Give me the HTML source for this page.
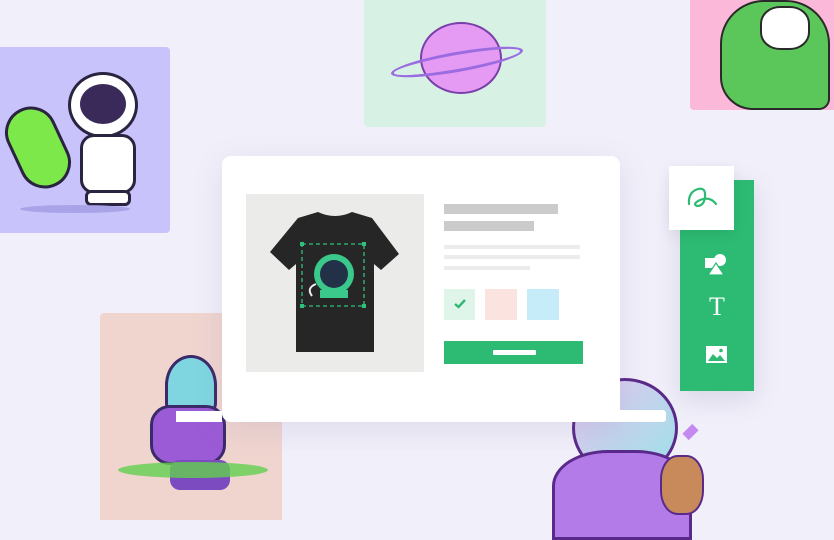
<!DOCTYPE html>
<html><head><style>
*{margin:0;padding:0;box-sizing:border-box}
body{width:834px;height:520px;overflow:hidden;background:#f1eff9;position:relative;font-family:"Liberation Sans",sans-serif}
.a{position:absolute}
</style></head><body>
<!-- purple astronaut card -->
<div class="a" style="left:0;top:47px;width:170px;height:186px;background:#c8c3fb;border-radius:0 4px 4px 0"></div>
<div class="a" style="left:68px;top:72px;width:70px;height:66px;border-radius:50%;background:#fff;border:3px solid #2a2440"></div>
<div class="a" style="left:80px;top:84px;width:46px;height:40px;border-radius:50%;background:#3a2a5a"></div>
<div class="a" style="left:80px;top:134px;width:56px;height:60px;border-radius:14px;background:#fff;border:3px solid #2a2440"></div>
<div class="a" style="left:85px;top:190px;width:46px;height:16px;border-radius:6px;background:#fff;border:3px solid #2a2440"></div>
<div class="a" style="left:12px;top:105px;width:52px;height:85px;border-radius:26px;background:#7de84a;border:3px solid #2a2440;transform:rotate(-25deg)"></div>
<div class="a" style="left:20px;top:205px;width:110px;height:8px;border-radius:50%;background:#a9a3e8"></div>
<!-- mint planet card -->
<div class="a" style="left:364px;top:0;width:182px;height:127px;background:#d8f1e5;border-radius:0 0 4px 4px"></div>
<div class="a" style="left:420px;top:22px;width:82px;height:72px;border-radius:50%;background:#e59af3;border:2px solid #7a3fa8"></div>
<div class="a" style="left:390px;top:52px;width:134px;height:20px;border-radius:50%;border:3px solid #9b6be0;transform:rotate(-10deg)"></div>
<!-- pink dino card -->
<div class="a" style="left:690px;top:0;width:144px;height:110px;background:#fcb8d8;border-radius:0 0 0 4px"></div>
<div class="a" style="left:720px;top:0;width:110px;height:110px;border-radius:40% 40% 10% 30%;background:#5bc75a;border:2px solid #2a2a2a"></div>
<div class="a" style="left:760px;top:6px;width:50px;height:44px;border-radius:40%;background:#fff;border:2px solid #2a2a2a"></div>
<!-- peach card -->
<div class="a" style="left:100px;top:313px;width:182px;height:207px;background:#f0d5cf;border-radius:4px 4px 0 0"></div>
<div class="a" style="left:165px;top:355px;width:52px;height:60px;border-radius:50% 50% 20% 20%;background:#7fd6e0;border:3px solid #3a2a6a"></div>
<div class="a" style="left:150px;top:405px;width:76px;height:60px;border-radius:20px;background:#9b5bd6;border:3px solid #3a2a6a"></div>
<div class="a" style="left:170px;top:460px;width:60px;height:30px;border-radius:10px;background:#7d4bc0"></div>
<div class="a" style="left:118px;top:462px;width:150px;height:16px;border-radius:50%;background:#62cf4e;opacity:.8"></div>
<!-- bottom right astronaut -->
<div class="a" style="left:572px;top:378px;width:106px;height:100px;border-radius:50%;background:linear-gradient(135deg,#e8c8f0,#9be0e8);border:3px solid #5a2a8a"></div>
<div class="a" style="left:552px;top:450px;width:140px;height:90px;border-radius:40% 40% 0 0;background:#b27be8;border:3px solid #5a2a8a"></div>
<div class="a" style="left:660px;top:455px;width:44px;height:60px;border-radius:40%;background:#c88a5a;border:2px solid #5a2a8a"></div>
<div class="a" style="left:686px;top:425px;width:9px;height:14px;background:#c58af0;transform:rotate(45deg)"></div>
<!-- main card -->
<div class="a" style="left:222px;top:156px;width:398px;height:266px;background:#fff;border-radius:9px;box-shadow:0 8px 30px rgba(120,110,170,.15)"></div>
<div class="a" style="left:246px;top:194px;width:178px;height:178px;background:#ebebea"></div>
<svg class="a" style="left:246px;top:194px" width="178" height="178" viewBox="0 0 178 178">
<path d="M52 24 L72 18 Q89 26 106 18 L126 24 L153 60 L135 76 L128 70 L128 158 L50 158 L50 70 L43 76 L24 58 Z" fill="#262626"/>
<rect x="56" y="50" width="62" height="62" fill="none" stroke="#2fc07a" stroke-width="1.3" stroke-dasharray="4 3"/>
<rect x="54" y="48" width="4" height="4" fill="#2fc07a"/><rect x="116" y="48" width="4" height="4" fill="#2fc07a"/>
<rect x="54" y="110" width="4" height="4" fill="#2fc07a"/><rect x="116" y="110" width="4" height="4" fill="#2fc07a"/>
<circle cx="88" cy="80" r="20" fill="#3ac98a"/><circle cx="88" cy="80" r="14" fill="#223048"/>
<rect x="74" y="96" width="28" height="8" fill="#3ac98a"/>
<path d="M70 90 Q60 94 66 102" stroke="#eee" stroke-width="2" fill="none"/>
</svg>
<div class="a" style="left:444px;top:204px;width:114px;height:10px;background:#cbcbcb"></div>
<div class="a" style="left:444px;top:221px;width:90px;height:10px;background:#cbcbcb"></div>
<div class="a" style="left:444px;top:245px;width:136px;height:4px;background:#ececec"></div>
<div class="a" style="left:444px;top:255px;width:136px;height:4px;background:#ececec"></div>
<div class="a" style="left:444px;top:266px;width:86px;height:4px;background:#ececec"></div>
<div class="a" style="left:444px;top:289px;width:31px;height:31px;background:#dff5ea"></div>
<svg class="a" style="left:453px;top:298px" width="14" height="12"><path d="M2 6 L5.5 9 L12 2" stroke="#2fb874" stroke-width="2.4" fill="none"/></svg>
<div class="a" style="left:485px;top:289px;width:32px;height:31px;background:#fbe4df"></div>
<div class="a" style="left:527px;top:289px;width:32px;height:31px;background:#c6ecf9"></div>
<div class="a" style="left:444px;top:341px;width:139px;height:23px;background:#2dbb73"></div>
<div class="a" style="left:493px;top:350px;width:43px;height:5px;background:#fff;border-radius:1px"></div>
<!-- white bar overlaying -->
<div class="a" style="left:600px;top:410px;width:66px;height:12px;background:#fff;border-radius:3px"></div>
<div class="a" style="left:176px;top:411px;width:46px;height:11px;background:#fff"></div>
<!-- toolbar -->
<div class="a" style="left:680px;top:180px;width:74px;height:211px;background:#2dbb73;box-shadow:0 8px 24px rgba(100,100,160,.18)"></div>
<div class="a" style="left:669px;top:166px;width:65px;height:64px;background:#fff;box-shadow:0 4px 14px rgba(0,0,0,.08)"></div>
<svg class="a" style="left:686px;top:184px" width="34" height="28"><path d="M3 20 Q2 8 12 5 Q20 3 19 13 Q18 22 11 22 Q6 20 14 16 Q24 12 30 20" stroke="#2dbb73" stroke-width="2.2" fill="none" stroke-linecap="round"/></svg>
<svg class="a" style="left:705px;top:253px" width="22" height="24"><rect x="0" y="5" width="10" height="10" fill="#fff"/><circle cx="15" cy="7" r="6" fill="#fff"/><path d="M11 10 L19 22 L3 22 Z" fill="#fff" stroke="#2dbb73" stroke-width="1.2"/></svg>
<div class="a" style="left:704px;top:292px;width:26px;text-align:center;color:#fff;font-family:'Liberation Serif',serif;font-size:26px;line-height:30px">T</div>
<svg class="a" style="left:706px;top:346px" width="22" height="18"><rect x="0" y="0" width="21" height="17" fill="#fff"/><path d="M2 15 L7 8 L11 12 L14 9 L19 15 Z" fill="#2dbb73"/><circle cx="15" cy="4.5" r="1.8" fill="#2dbb73"/></svg>
</body></html>
